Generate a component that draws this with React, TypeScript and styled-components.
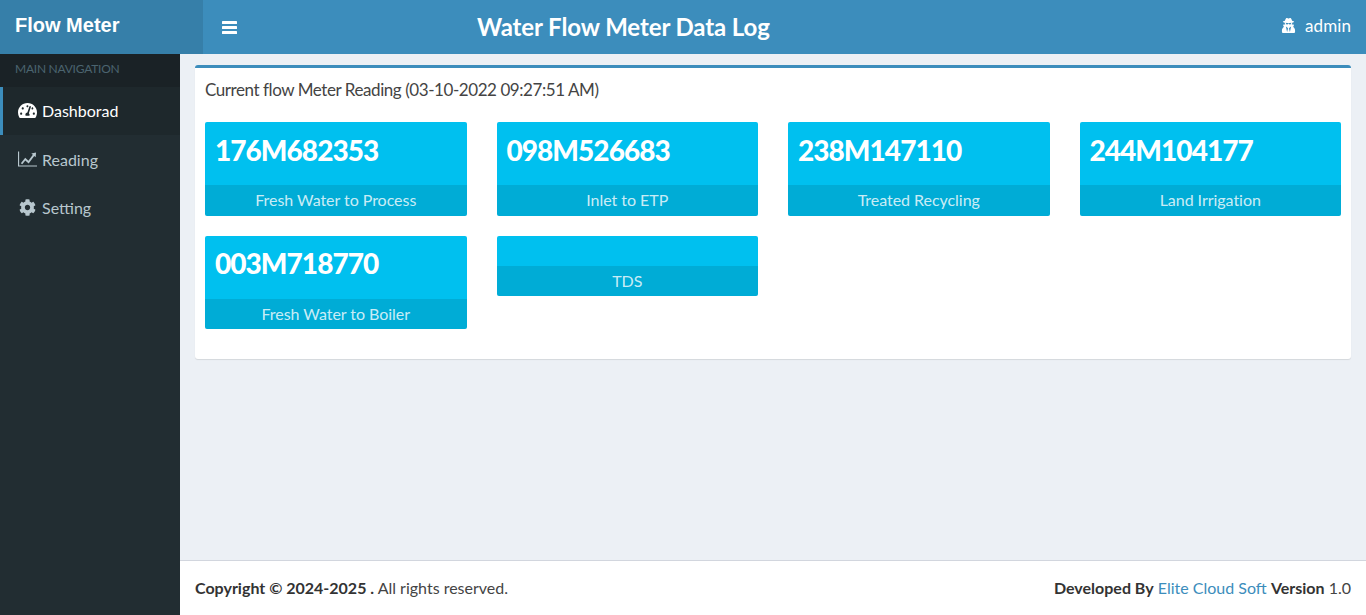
import React from "react";
import styled, { createGlobalStyle } from "styled-components";
import { FaCog, FaTachometerAlt, FaUserSecret } from "react-icons/fa";

const Global = createGlobalStyle`
  html, body { margin: 0; padding: 0; height: 100%; overflow: hidden; }
  body { font-family: Lato, "Noto Sans", sans-serif; color: #333; background: #ecf0f5; }
  * { box-sizing: border-box; }
`;
const Page = styled.div`display: flex; flex-direction: column; height: 615px;`;
const Header = styled.header`display: flex; height: 54px; background: #3c8dbc; color: #fff; flex: none;`;
const Logo = styled.div`
  width: 203px; background: #367fa9; padding-left: 15px; flex: none;
  font: 700 20px/50px "Liberation Sans", sans-serif;
`;
const Navbar = styled.div`display: flex; flex: 1; align-items: center; padding: 0 15px 0 19px;`;
const Toggle = styled.span`display: flex; width: 255px; flex: none; padding-top: 1px;`;
const Title = styled.h1`margin: 0; font-size: 24px; font-weight: 700; flex: 1; line-height: 54px; letter-spacing: -.1px;`;
const User = styled.div`display: flex; align-items: center; gap: 9px; font-size: 17px; padding-bottom: 3px; letter-spacing: .1px;`;
const Body = styled.div`display: flex; flex: 1; min-height: 0;`;
const Sidebar = styled.nav`width: 180px; flex: none; background: #222d32;`;
const NavLabel = styled.div`
  height: 33px; background: #1a2226; color: #4b646f; font-size: 12px; line-height: 30px; padding-left: 15px; letter-spacing: -.25px;
`;
const NavItem = styled.div<{ $active?: boolean }>`
  display: flex; align-items: center; height: 48px; margin-bottom: ${p => (p.$active ? "1px" : "0")};
  padding-left: 15px; gap: 5px; font-size: 16px; padding-bottom: 2px;
  color: ${p => (p.$active ? "#fff" : "#b8c7ce")};
  background: ${p => (p.$active ? "#1e282c" : "transparent")};
  border-left: 3px solid ${p => (p.$active ? "#3c8dbc" : "transparent")};
  svg { width: 19px; flex: none; font-size: 17px; }
`;
const Main = styled.div`flex: 1; display: flex; flex-direction: column; min-width: 0;`;
const Content = styled.main`flex: 1; padding: 11px 15px 0;`;
const Box = styled.section`
  height: 294px; background: #fff; border-top: 3px solid #3c8dbc; border-radius: 3px;
  box-shadow: 0 1px 1px rgba(0,0,0,.1); padding: 10px;
`;
const BoxTitle = styled.h3`margin: 0; font-size: 17px; font-weight: 400; line-height: 24px; color: #444; letter-spacing: -.43px;`;
const Grid = styled.div`
  display: grid; grid-template-columns: repeat(4, 1fr); column-gap: 30px; row-gap: 20px;
  align-items: start; margin-top: 20px;
`;
const Card = styled.div`background: #00c0ef; color: #fff; border-radius: 2px; overflow: hidden;`;
const Value = styled.div<{ $empty?: boolean }>`
  height: ${p => (p.$empty ? "30px" : "63px")}; padding: 9.5px 10px; font-size: 28px; font-weight: 900; line-height: 36px; letter-spacing: -.95px;
`;
const Label = styled.div<{ $empty?: boolean }>`
  height: ${p => (p.$empty ? "30px" : "30.5px")}; background: rgba(0,0,0,.1); color: rgba(255,255,255,.8); text-align: center;
  font-size: 16px; line-height: 29px; letter-spacing: -.04px;
`;
const Footer = styled.footer`
  height: 55px; flex: none; background: #fff; border-top: 1px solid #d2d6de; padding: 0 15px 2px;
  display: flex; align-items: center; justify-content: space-between; font-size: 16px; color: #444;
  b { color: #333; }
`;
const Link = styled.a`color: #3c8dbc; text-decoration: none;`;

const cards = [
  ["176M682353", "Fresh Water to Process"],
  ["098M526683", "Inlet to ETP"],
  ["238M147110", "Treated Recycling"],
  ["244M104177", "Land Irrigation"],
  ["003M718770", "Fresh Water to Boiler"],
  ["", "TDS"],
];

const BarsIcon = () => (
  <svg width="15" height="14" viewBox="0 0 15 14" fill="#fff">
    <rect x="0" y="0" width="15" height="3" rx=".6" />
    <rect x="0" y="5" width="15" height="3" rx=".6" />
    <rect x="0" y="10" width="15" height="3" rx=".6" />
  </svg>
);

const AreaLineIcon = () => (
  <svg viewBox="0 0 20 16" height="16" fill="currentColor">
    <path d="M0 0h1.2v14.8H20V16H0z" />
    <path d="M3 12.6l4.6-5.8 3.4 3 4.6-6.2-1.6-1.4L19 1.2l-.4 5-1.5-1.3-5.9 7.8-3.5-3.1-3.2 4z" />
  </svg>
);

export default function App() {
  return (
    <Page>
      <Global />
      <Header>
        <Logo>Flow Meter</Logo>
        <Navbar>
          <Toggle><BarsIcon /></Toggle>
          <Title>Water Flow Meter Data Log</Title>
          <User><FaUserSecret size={15} />admin</User>
        </Navbar>
      </Header>
      <Body>
        <Sidebar>
          <NavLabel>MAIN NAVIGATION</NavLabel>
          <NavItem $active><FaTachometerAlt />Dashborad</NavItem>
          <NavItem><AreaLineIcon />Reading</NavItem>
          <NavItem><FaCog />Setting</NavItem>
        </Sidebar>
        <Main>
          <Content>
            <Box>
              <BoxTitle>Current flow Meter Reading (03-10-2022 09:27:51 AM)</BoxTitle>
              <Grid>
                {cards.map(([v, l]) => (
                  <Card key={l}>
                    <Value $empty={!v}>{v}</Value>
                    <Label $empty={!v}>{l}</Label>
                  </Card>
                ))}
              </Grid>
            </Box>
          </Content>
          <Footer>
            <span><b>Copyright © 2024-2025 .</b> All rights reserved.</span>
            <span><b>Developed By</b> <Link>Elite Cloud Soft</Link> <b>Version</b> 1.0</span>
          </Footer>
        </Main>
      </Body>
    </Page>
  );
}
